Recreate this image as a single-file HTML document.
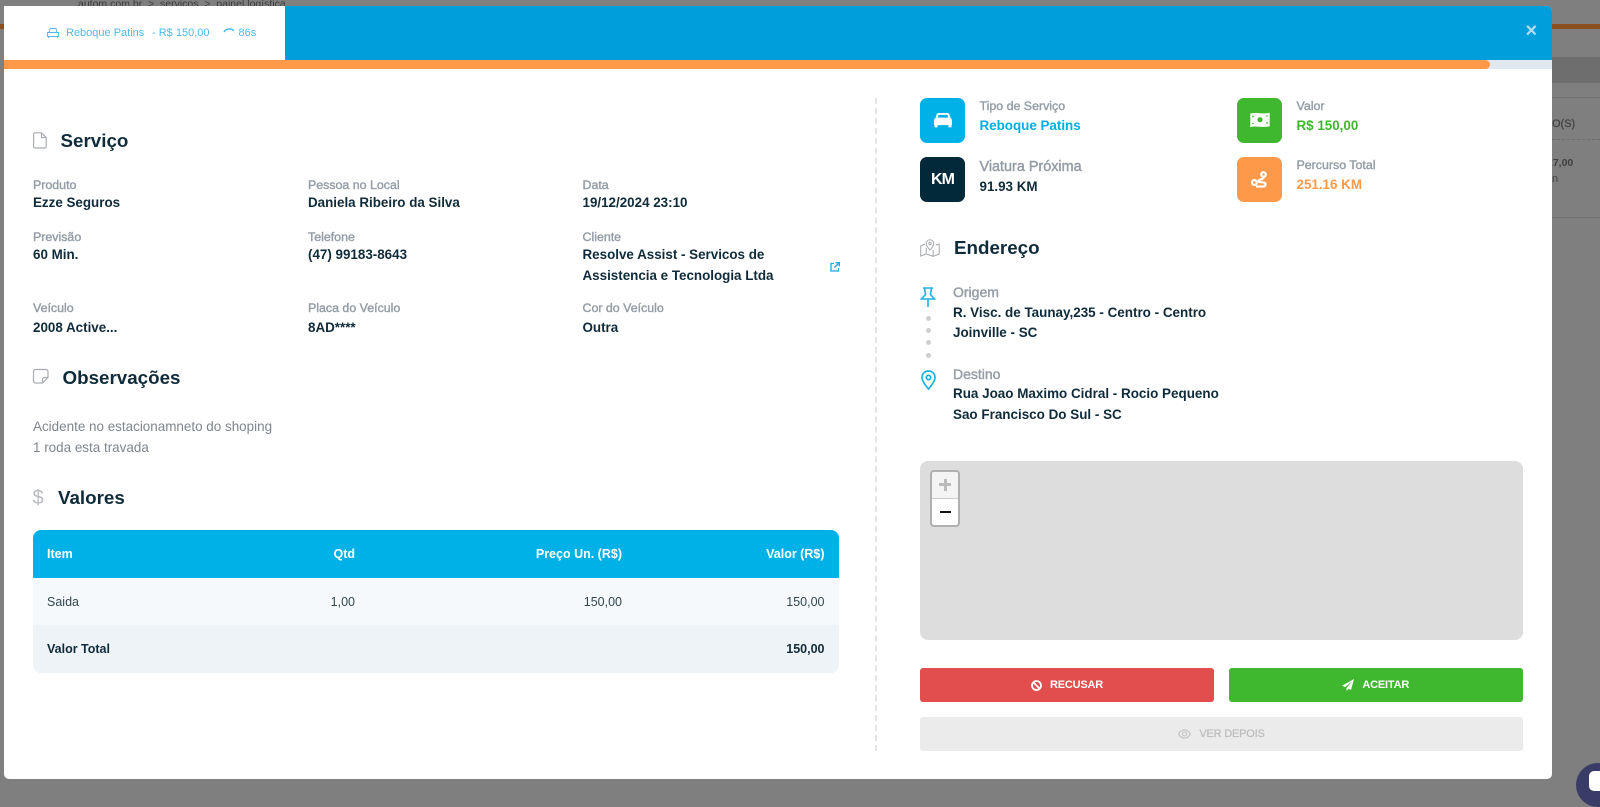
<!DOCTYPE html>
<html lang="pt"><head><meta charset="utf-8"><title>Serviço</title>
<style>
html,body{margin:0;padding:0}
body{width:1600px;height:793px;overflow:hidden;background:#7f7f7f;position:relative;font-family:"Liberation Sans",sans-serif;color:#0f2b3a}
.a{position:absolute;white-space:nowrap}
.t{position:absolute;white-space:nowrap;line-height:18px}
.l{font-size:12.4px;color:#949ca6;-webkit-text-stroke:.4px #949ca6}
.v{font-size:13.4px;font-weight:700;color:#0f2b3a}
.h{font-size:18.8px;font-weight:700;color:#0f2b3a;line-height:24px;position:absolute;white-space:nowrap}
.ic{position:absolute;width:45px;height:45px;border-radius:7px}
.r{text-align:right}
.btn{position:absolute;border-radius:3px;color:#fff;font-size:11px;font-weight:700;letter-spacing:-.2px;display:flex;align-items:center;justify-content:center;gap:8px}
svg{position:absolute;overflow:visible}
</style></head><body>

<div class="a" style="left:78px;top:-4px;font-size:10.5px;line-height:16px;color:#3c3c3c">autom.com.br &nbsp;&gt;&nbsp; serviços &nbsp;&gt;&nbsp; painel logística</div>
<div class="a" style="left:0;top:24px;width:1600px;height:5px;background:#8a4f1c"></div>
<div class="a" style="left:1552px;top:57px;width:48px;height:26px;background:#6e6e6e"></div>
<div class="a" style="left:1552px;top:97px;width:48px;height:1px;background:#737373"></div>
<div class="a" style="left:1552px;top:139px;width:48px;height:0;border-top:1px dashed #6e6e6e"></div>
<div class="a" style="left:1552px;top:217px;width:48px;height:1px;background:#737373"></div>
<div class="a" style="left:1552px;top:116px;font-size:11px;line-height:16px;color:#3f3f3f;-webkit-text-stroke:.2px #3f3f3f">O(S)</div>
<div class="a" style="left:1547px;top:155px;font-size:10.5px;font-weight:700;line-height:16px;color:#3f3f3f">27,00</div>
<div class="a" style="left:1552px;top:171px;font-size:11px;line-height:16px;color:#444">n</div>
<div class="a" style="left:1576px;top:763px;width:44px;height:44px;border-radius:50%;background:#383c66"></div>
<div class="a" style="left:1589px;top:771px;width:20px;height:20px;border-radius:5px;background:#fff"></div>

<div class="a" style="left:4px;top:6px;width:1548px;height:773px;background:#fff;border-radius:0 5px 5px 5px;overflow:hidden">
<div class="a" style="left:0;top:0;width:1548px;height:54px;background:#009edb"></div>
<div class="a" style="left:0;top:0;width:281px;height:54px;background:#fff"></div>
<div class="a" style="left:0;top:54px;width:1548px;height:9px;background:#e2e8f0"></div>
<div class="a" style="left:0;top:54px;width:1486px;height:9px;background:#ff994a;border-radius:0 5px 5px 0"></div>
</div>

<div class="a" style="left:1525.5px;top:18.500px;font-size:20px;font-weight:700;line-height:24px;color:#b5def3">×</div>

<svg style="left:47px;top:27px" width="12" height="12" viewBox="0 0 12 12" fill="none" stroke="#4fb8e8" stroke-width=".9"><path d="M2 5.500 3 1.500h6l1 4M.5 5.500h11v4H.5zM1.500 9.500v1.500M10.500 9.500v1.500"/></svg>
<div class="t" style="left:66px;top:24px;font-size:11px;color:#4fb8e8">Reboque Patins</div>
<div class="t" style="left:152px;top:24px;font-size:11px;color:#4fb8e8">- R$ 150,00</div>
<svg style="left:223px;top:27px" width="12" height="8" viewBox="0 0 12 8" fill="none" stroke="#4fb8e8" stroke-width="1.500"><path d="M1 5C3 1.500 8 1 11 3.800"/></svg>
<div class="t" style="left:238.500px;top:24px;font-size:11px;color:#4fb8e8">86s</div>

<svg style="left:33px;top:132px" width="14" height="17" viewBox="0 0 14 17" fill="none" stroke="#a9adb2" stroke-width="1.200"><path d="M1.800.8h6.700l4.700 4.700v9a1.500 1.500 0 0 1-1.500 1.500H1.800A1.300 1.300 0 0 1 .6 14.500V2.200A1.300 1.300 0 0 1 1.800.8zM8.500.8v4.700h4.700"/></svg>
<div class="h" style="left:60.500px;top:129px">Serviço</div>

<div class="t l" style="left:33px;top:176px">Produto</div><div class="t v" style="left:33px;top:194px">Ezze Seguros</div>
<div class="t l" style="left:308px;top:176px">Pessoa no Local</div><div class="t v" style="left:308px;top:194px">Daniela Ribeiro da Silva</div>
<div class="t l" style="left:582.500px;top:176px">Data</div><div class="t v" style="left:582.500px;top:194px">19/12/2024 23:10</div>

<div class="t l" style="left:33px;top:228px">Previsão</div><div class="t v" style="left:33px;top:246px">60 Min.</div>
<div class="t l" style="left:308px;top:228px">Telefone</div><div class="t v" style="left:308px;top:246px">(47) 99183-8643</div>
<div class="t l" style="left:582.500px;top:228px">Cliente</div>
<div class="t v" style="left:582.500px;top:246px">Resolve Assist - Servicos de</div>
<div class="t v" style="left:582.500px;top:266.500px">Assistencia e Tecnologia Ltda</div>
<svg style="left:830px;top:262px" width="10" height="10" viewBox="0 0 10 10" fill="none" stroke="#1ea7e0" stroke-width="1.300"><path d="M4 1.500H1v7.500h7.500V6M5.500.7h3.800v3.800M9 1 4.500 5.500"/></svg>

<div class="t l" style="left:33px;top:299px">Veículo</div><div class="t v" style="left:33px;top:318.500px">2008 Active...</div>
<div class="t l" style="left:308px;top:299px">Placa do Veículo</div><div class="t v" style="left:308px;top:318.500px">8AD****</div>
<div class="t l" style="left:582.500px;top:299px">Cor do Veículo</div><div class="t v" style="left:582.500px;top:318.500px">Outra</div>

<svg style="left:33px;top:369px" width="16" height="15" viewBox="0 0 16 15" fill="none" stroke="#a9adb2" stroke-width="1.200"><path d="M9.500 14H2.500a2 2 0 0 1-2-2V2.500a2 2 0 0 1 2-2h10.500a2 2 0 0 1 2 2V8.500zM14.800 8.500h-3.500a1.800 1.800 0 0 0-1.800 1.800V14"/></svg>
<div class="h" style="left:62.500px;top:365.500px">Observações</div>
<div class="t" style="left:33px;top:418px;font-size:13.450px;color:#7f868d">Acidente no estacionamneto do shoping</div>
<div class="t" style="left:33px;top:438.500px;font-size:13.450px;color:#7f868d">1 roda esta travada</div>

<div class="a" style="left:32.500px;top:486px;font-size:20px;line-height:24px;color:#b8bbbf;font-weight:400">$</div>
<div class="h" style="left:58px;top:486px">Valores</div>

<div class="a" style="top:530px;height:143px;left:33px;width:806px;border-radius:8px;overflow:hidden;background:#eef3f7">
<div class="a" style="left:0;top:0;width:806px;height:48px;background:#00b1e8"></div>
<div class="a" style="left:0;top:48px;width:806px;height:47px;background:#f5f9fc"></div>
</div>
<div class="t" style="left:47px;top:545px;font-size:12.500px;font-weight:700;color:#fff">Item</div>
<div class="t r" style="right:1245px;top:545px;font-size:12.500px;font-weight:700;color:#fff">Qtd</div>
<div class="t r" style="right:978px;top:545px;font-size:12.500px;font-weight:700;color:#fff">Preço Un. (R$)</div>
<div class="t r" style="right:775.500px;top:545px;font-size:12.500px;font-weight:700;color:#fff">Valor (R$)</div>
<div class="t" style="left:47px;top:593px;font-size:12.500px;color:#33474f">Saida</div>
<div class="t r" style="right:1245px;top:593px;font-size:12.500px;color:#33474f">1,00</div>
<div class="t r" style="right:978px;top:593px;font-size:12.500px;color:#33474f">150,00</div>
<div class="t r" style="right:775.500px;top:593px;font-size:12.500px;color:#33474f">150,00</div>
<div class="t" style="left:47px;top:640px;font-size:12.500px;font-weight:700;color:#0f2b3a">Valor Total</div>
<div class="t r" style="right:775.500px;top:640px;font-size:12.500px;font-weight:700;color:#0f2b3a">150,00</div>

<div class="a" style="left:875px;top:98px;width:0;height:653px;border-left:2px dashed #e4e4e4"></div>

<div class="ic" style="left:920px;top:97.500px;background:#00b1e8"></div>
<svg style="left:933.500px;top:112px" width="18" height="16" viewBox="0 0 19 17" fill="#fff"><path d="M4.500 1h10c.8 0 1.400.5 1.700 1.200L17.500 6.500c.9.500 1.500 1.300 1.500 2.300V14h-.5v2.300h-3.200V14H3.700v2.300H.5V14H0V8.800c0-1 .6-1.800 1.500-2.300L2.800 2.200C3.100 1.500 3.700 1 4.500 1zM4.800 3 3.900 6h11.200l-.9-3z" fill-rule="evenodd"/></svg>
<div class="t l" style="left:979.500px;top:97px">Tipo de Serviço</div>
<div class="t v" style="left:979.500px;top:116.500px;color:#00aee6">Reboque Patins</div>

<div class="ic" style="left:1237px;top:97.500px;background:#3fb72e"></div>
<svg style="left:1250px;top:112px" width="20" height="16" viewBox="0 0 20 16"><path d="M.3 1.500c6-1.500 12 1 19.400-.8v13.600c-7 1.800-13-.8-19.400.8z" fill="#fff"/><circle cx="10" cy="7.700" r="2.600" fill="#3fb72e"/><circle cx="3" cy="4.500" r=".9" fill="#3fb72e"/><circle cx="17" cy="11" r=".9" fill="#3fb72e"/><circle cx="3" cy="11.500" r=".8" fill="#3fb72e"/><circle cx="17" cy="4" r=".8" fill="#3fb72e"/></svg>
<div class="t l" style="left:1296.500px;top:97px">Valor</div>
<div class="t v" style="left:1296.500px;top:116.500px;color:#3fb72e">R$ 150,00</div>

<div class="ic" style="left:920px;top:156.500px;background:#02293a"></div>
<div class="a" style="left:920px;top:171px;width:45px;text-align:center;font-size:16px;font-weight:700;line-height:18px;color:#fff;letter-spacing:-1px">KM</div>
<div class="t" style="left:979.500px;top:157.500px;font-size:14.400px;color:#949ca6;-webkit-text-stroke:.45px #949ca6">Viatura Próxima</div>
<div class="t v" style="left:979.500px;top:178px">91.93 KM</div>

<div class="ic" style="left:1237px;top:156.500px;background:#ff994a"></div>
<svg style="left:1251px;top:171px" width="18" height="17" viewBox="0 0 18 17" fill="none" stroke="#fff" stroke-width="2.200"><circle cx="12.500" cy="3.500" r="2.300"/><circle cx="3.400" cy="11.500" r="2.400"/><path d="M12.500 6.500c0 2.500-5 1.500-5 3.500s7 .5 7 3-1 2.500-3 2.500H5"/></svg>
<div class="t l" style="left:1296.500px;top:156px">Percurso Total</div>
<div class="t v" style="left:1296.500px;top:175.500px;color:#ff994a">251.16 KM</div>

<svg style="left:920px;top:239px" width="20" height="18" viewBox="0 0 20 18" fill="none" stroke="#a5a9ad" stroke-width="1"><path d="M5 5 .7 7v10l5.500-2 7 2.300 6-2.300V5l-3.500 1.300M6.200 9v6M13.200 11v6"/><path d="M10 .7a3.800 3.800 0 0 0-3.800 3.800C6.200 7 10 11 10 11s3.800-4 3.800-6.500A3.800 3.800 0 0 0 10 .7z"/><circle cx="10" cy="4.500" r="1.200"/></svg>
<div class="h" style="left:954px;top:236px">Endereço</div>

<svg style="left:920px;top:287px" width="16" height="21" viewBox="0 0 16 21" fill="none" stroke="#1fb0e8" stroke-width="1.600"><path d="M3 1h10M4.500 1l1 6.500L1.500 12h13l-4-4.500 1-6.500M8 12v8"/></svg>
<div class="a" style="left:926px;top:315.500px;width:5px;height:5px;border-radius:50%;background:#cfcfcf"></div>
<div class="a" style="left:926px;top:328px;width:5px;height:5px;border-radius:50%;background:#cfcfcf"></div>
<div class="a" style="left:926px;top:340px;width:5px;height:5px;border-radius:50%;background:#cfcfcf"></div>
<div class="a" style="left:926px;top:352.500px;width:5px;height:5px;border-radius:50%;background:#cfcfcf"></div>
<svg style="left:921px;top:370px" width="15" height="20" viewBox="0 0 15 20" fill="none" stroke="#1fb0e8" stroke-width="1.700"><path d="M7.500 19C5 16 1 11.500 1 7.500a6.500 6.500 0 0 1 13 0c0 4-4 8.500-6.500 11.500z"/><circle cx="7.500" cy="7.500" r="2.200"/></svg>

<div class="t" style="left:953px;top:283px;font-size:14px;color:#949ca6;-webkit-text-stroke:.4px #949ca6">Origem</div>
<div class="t v" style="left:953px;top:303.500px;font-size:13.450px">R. Visc. de Taunay,235 - Centro - Centro</div>
<div class="t v" style="left:953px;top:324px;font-size:13.450px">Joinville - SC</div>
<div class="t" style="left:953px;top:365px;font-size:14px;color:#949ca6;-webkit-text-stroke:.4px #949ca6">Destino</div>
<div class="t v" style="left:953px;top:385px;font-size:13.450px">Rua Joao Maximo Cidral - Rocio Pequeno</div>
<div class="t v" style="left:953px;top:405.500px;font-size:13.450px">Sao Francisco Do Sul - SC</div>

<div class="a" style="left:920px;top:461px;width:603px;height:179px;background:#dddddd;border-radius:8px"></div>
<div class="a" style="left:930px;top:470px;width:26px;height:53px;border:2px solid #b0b0b0;border-radius:4px;background:#fff;overflow:hidden">
<div class="a" style="left:0;top:0;width:26px;height:26px;background:#f4f4f4;border-bottom:1px solid #ccc"></div>
<div class="a" style="left:7px;top:11px;width:12px;height:3px;background:#bbb"></div>
<div class="a" style="left:11.500px;top:6.500px;width:3px;height:12px;background:#bbb"></div>
<div class="a" style="left:8px;top:39px;width:11px;height:2px;background:#111"></div>
</div>

<div class="btn" style="left:920px;top:668px;width:294px;height:34px;background:#e24d4d">
<svg style="position:static" width="11" height="11" viewBox="0 0 11 11" fill="none" stroke="#fff" stroke-width="1.800"><circle cx="5.500" cy="5.500" r="4.500"/><path d="M2.400 2.400l6.200 6.200"/></svg><span>RECUSAR</span></div>
<div class="btn" style="left:1228.500px;top:668px;width:294.500px;height:34px;background:#3fb72e">
<svg style="position:static" width="12" height="12" viewBox="0 0 12 12" fill="#fff"><path d="M12 0 0 6.800l3 1.300L10 2.500 4.500 9v3l2-2.200 2.500 1.100z"/></svg><span>ACEITAR</span></div>
<div class="btn" style="left:920px;top:716.500px;width:603px;height:34px;background:#ebebeb;color:#bdbdbd;font-weight:400;-webkit-text-stroke:.25px #bdbdbd">
<svg style="position:static" width="13" height="10" viewBox="0 0 13 10" fill="none" stroke="#bdbdbd" stroke-width="1"><path d="M.6 5C2 2.200 4 1 6.500 1s4.500 1.200 5.900 4c-1.400 2.800-3.400 4-5.900 4S2 7.800.6 5z"/><circle cx="6.500" cy="5" r="2"/></svg><span>VER DEPOIS</span></div>

</body></html>
